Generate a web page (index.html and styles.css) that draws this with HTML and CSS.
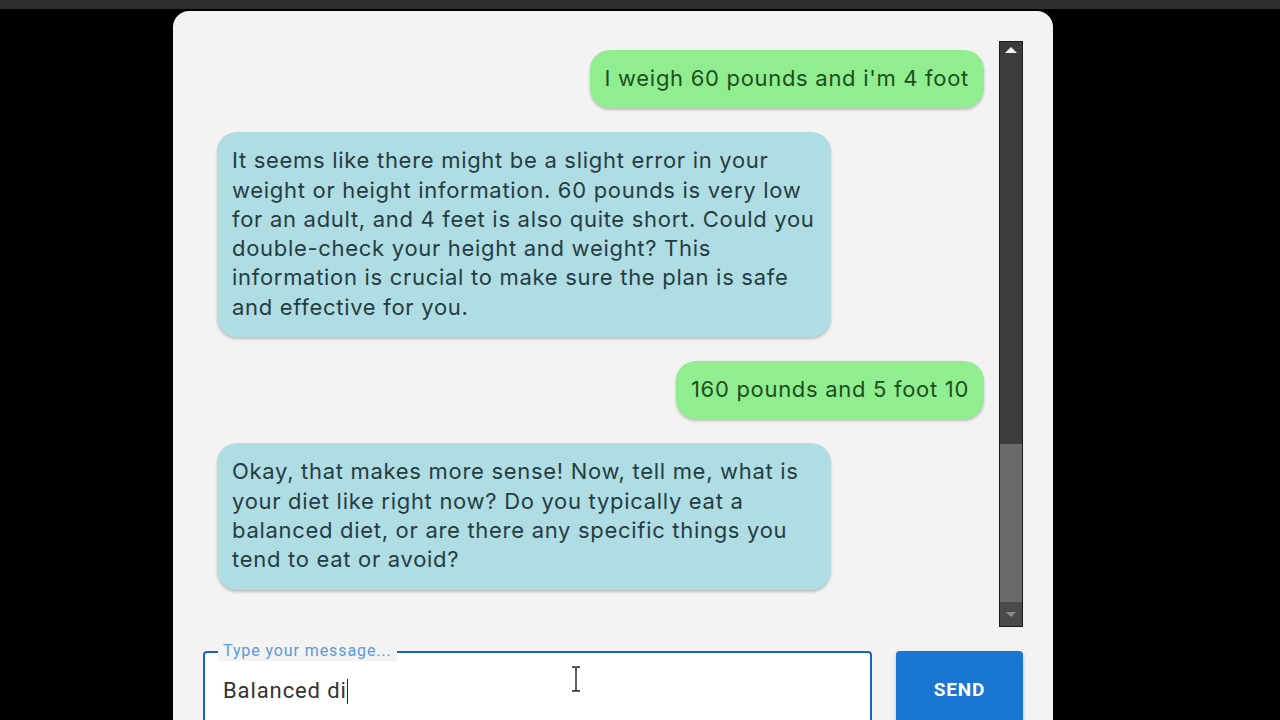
FILE: index.html
```html
<!DOCTYPE html>
<html lang="en">
<head>
<meta charset="utf-8">
<title>Chat</title>
<link rel="stylesheet" href="styles.css">
</head>
<body>
<div class="topbar"></div>
<main class="card">
  <div class="chat">
    <div class="messages">
      <div class="msg user">I weigh 60 pounds and i'm 4 foot</div>
      <div class="msg bot">It seems like there might be a slight error in your weight or height information. 60 pounds is very low for an adult, and 4 feet is also quite short. Could you double-check your height and weight? This information is crucial to make sure the plan is safe and effective for you.</div>
      <div class="msg user">160 pounds and 5 foot 10</div>
      <div class="msg bot">Okay, that makes more sense! Now, tell me, what is your diet like right now? Do you typically eat a balanced diet, or are there any specific things you tend to eat or avoid?</div>
    </div>
    <div class="scrollbar">
      <div class="sb-up"><span class="tri-up"></span></div>
      <div class="sb-track"></div>
      <div class="sb-thumb"></div>
      <div class="sb-down"><span class="tri-down"></span></div>
    </div>
  </div>
  <div class="composer">
    <div class="field">
      <span class="label">Type your message...</span>
      <div class="value">Balanced di<span class="caret"></span></div>
      <svg class="ibeam" width="12" height="26" viewBox="0 0 12 26"><path d="M2 1h3l1 1 1-1h3M6 2v22M2 25h3l1-1 1 1h3" fill="none" stroke="#222" stroke-width="1.4"/></svg>
    </div>
    <button class="send">SEND</button>
  </div>
</main>
</body>
</html>
```

FILE: styles.css
```css
html, body {
  margin: 0;
  padding: 0;
  background: #000;
  height: 720px;
  overflow: hidden;
}

.topbar {
  height: 9px;
  background: #2e2e2e;
  margin-bottom: 2px;
}

.card {
  width: 820px;
  margin-left: 173px;
  background: #f3f3f3;
  border-radius: 16px 16px 0 0;
  padding: 30px 30px 0 30px;
  height: 679px;
  overflow: hidden;
  display: flex;
  flex-direction: column;
  gap: 24px;
}

.chat {
  display: flex;
  height: 586px;
  flex: none;
}

.messages {
  flex: 1;
  padding: 9px 15px 0 14px;
  display: flex;
  flex-direction: column;
  gap: 24px;
  font-family: Inter, "Noto Sans", sans-serif;
  font-size: 22px;
  letter-spacing: 0.7px;
  line-height: 29.3px;
}

.msg {
  max-width: 80%;
  box-sizing: border-box;
  padding: 14px 15px 15px 15px;
  border-radius: 20px;
  box-shadow: 0 2px 3px rgba(0, 0, 0, 0.22);
}

.user {
  align-self: flex-end;
  background: #90ee90;
  color: #1d4f1d;
}

.bot {
  align-self: flex-start;
  background: #b0dce4;
  color: #243d42;
}

.scrollbar {
  width: 22px;
  border: 1px solid #1c1c1c;
  background: #3c3c3c;
  display: flex;
  flex-direction: column;
}

.sb-up {
  height: 24px;
  display: flex;
  justify-content: center;
  align-items: center;
}

.tri-up {
  width: 0;
  height: 0;
  border-left: 6px solid transparent;
  border-right: 6px solid transparent;
  border-bottom: 6px solid #f2f2f2;
  margin-top: -8px;
}

.sb-track {
  flex: 1;
}

.sb-thumb {
  height: 158px;
  background: #6a6a68;
}

.sb-down {
  height: 24px;
  background: #4a4a4a;
  display: flex;
  justify-content: center;
  align-items: center;
}

.tri-down {
  width: 0;
  height: 0;
  border-left: 5px solid transparent;
  border-right: 5px solid transparent;
  border-top: 5px solid #8a8a8a;
}

.composer {
  display: flex;
  gap: 24px;
  flex: none;
}

.field {
  position: relative;
  width: 665px;
  height: 76px;
  border: 2px solid #1565c0;
  border-radius: 4px;
  background: #fff;
  box-sizing: content-box;
  font-family: Roboto, "Liberation Sans", sans-serif;
}

.label {
  position: absolute;
  top: -12px;
  left: 13px;
  padding: 0 5px;
  background: #f3f3f3;
  color: #5a9bdc;
  font-size: 16px;
  letter-spacing: 0.9px;
  line-height: 20px;
}

.value {
  padding: 25px 0 0 18px;
  font-size: 22px;
  letter-spacing: 0.9px;
  line-height: 26px;
  color: #333;
  display: flex;
  align-items: center;
}

.caret {
  display: inline-block;
  width: 1.5px;
  height: 25px;
  background: #222;
  margin-left: 0;
}

.ibeam {
  position: absolute;
  left: 365px;
  top: 13px;
}

.send {
  width: 127px;
  height: 80px;
  border: none;
  border-radius: 4px;
  background: #1976d2;
  color: #fff;
  font-family: Roboto, "Liberation Sans", sans-serif;
  font-weight: 700;
  font-size: 19px;
  letter-spacing: 0.9px;
  box-shadow: 0 2px 4px rgba(0, 0, 0, 0.2);
  display: flex;
  justify-content: center;
  align-items: flex-start;
  padding: 27px 0 0 0;
}
```
